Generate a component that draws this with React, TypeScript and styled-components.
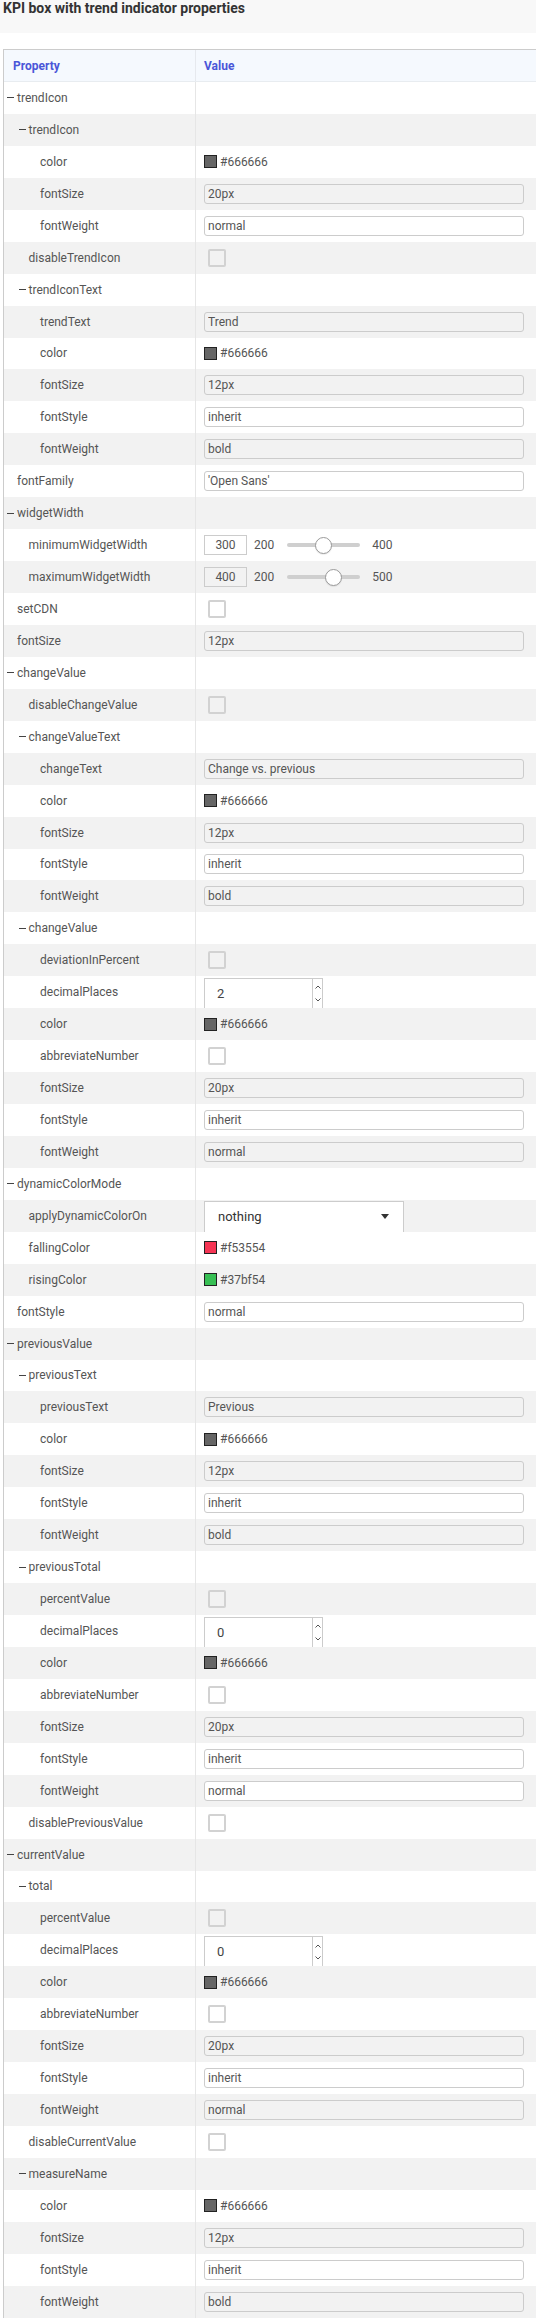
import React from 'react';
import styled, { createGlobalStyle } from 'styled-components';

const GlobalStyle = createGlobalStyle`
  html, body { margin: 0; padding: 0; background: #ffffff; }
  body {
    font-family: Roboto, "Liberation Sans", Arial, sans-serif;
    font-size: 12px;
    color: #555555;
  }
  * { box-sizing: border-box; }
`;

type Kind = 'group' | 'text' | 'color' | 'check' | 'slider' | 'spin' | 'select';

interface RowDef {
  label: string;
  level: number;
  kind: Kind;
  value?: string;
  disabled?: boolean;
  min?: number;
  max?: number;
}

const g = (label: string, level: number): RowDef => ({ label, level, kind: 'group' });
const tx = (label: string, level: number, value: string, disabled = false): RowDef => ({ label, level, kind: 'text', value, disabled });
const col = (label: string, level: number, value = '#666666'): RowDef => ({ label, level, kind: 'color', value });
const chk = (label: string, level: number): RowDef => ({ label, level, kind: 'check' });
const spin = (label: string, level: number, value: string): RowDef => ({ label, level, kind: 'spin', value });

const rows: RowDef[] = [
  g('trendIcon', 0),
  g('trendIcon', 1),
  col('color', 2),
  tx('fontSize', 2, '20px', true),
  tx('fontWeight', 2, 'normal'),
  chk('disableTrendIcon', 1),
  g('trendIconText', 1),
  tx('trendText', 2, 'Trend', true),
  col('color', 2),
  tx('fontSize', 2, '12px', true),
  tx('fontStyle', 2, 'inherit'),
  tx('fontWeight', 2, 'bold', true),
  tx('fontFamily', 0, "'Open Sans'"),
  g('widgetWidth', 0),
  { label: 'minimumWidgetWidth', level: 1, kind: 'slider', value: '300', min: 200, max: 400 },
  { label: 'maximumWidgetWidth', level: 1, kind: 'slider', value: '400', min: 200, max: 500, disabled: true },
  chk('setCDN', 0),
  tx('fontSize', 0, '12px', true),
  g('changeValue', 0),
  chk('disableChangeValue', 1),
  g('changeValueText', 1),
  tx('changeText', 2, 'Change vs. previous', true),
  col('color', 2),
  tx('fontSize', 2, '12px', true),
  tx('fontStyle', 2, 'inherit'),
  tx('fontWeight', 2, 'bold', true),
  g('changeValue', 1),
  chk('deviationInPercent', 2),
  spin('decimalPlaces', 2, '2'),
  col('color', 2),
  chk('abbreviateNumber', 2),
  tx('fontSize', 2, '20px', true),
  tx('fontStyle', 2, 'inherit'),
  tx('fontWeight', 2, 'normal', true),
  g('dynamicColorMode', 0),
  { label: 'applyDynamicColorOn', level: 1, kind: 'select', value: 'nothing' },
  col('fallingColor', 1, '#f53554'),
  col('risingColor', 1, '#37bf54'),
  tx('fontStyle', 0, 'normal'),
  g('previousValue', 0),
  g('previousText', 1),
  tx('previousText', 2, 'Previous', true),
  col('color', 2),
  tx('fontSize', 2, '12px', true),
  tx('fontStyle', 2, 'inherit'),
  tx('fontWeight', 2, 'bold', true),
  g('previousTotal', 1),
  chk('percentValue', 2),
  spin('decimalPlaces', 2, '0'),
  col('color', 2),
  chk('abbreviateNumber', 2),
  tx('fontSize', 2, '20px', true),
  tx('fontStyle', 2, 'inherit'),
  tx('fontWeight', 2, 'normal'),
  chk('disablePreviousValue', 1),
  g('currentValue', 0),
  g('total', 1),
  chk('percentValue', 2),
  spin('decimalPlaces', 2, '0'),
  col('color', 2),
  chk('abbreviateNumber', 2),
  tx('fontSize', 2, '20px', true),
  tx('fontStyle', 2, 'inherit'),
  tx('fontWeight', 2, 'normal', true),
  chk('disableCurrentValue', 1),
  g('measureName', 1),
  col('color', 2),
  tx('fontSize', 2, '12px', true),
  tx('fontStyle', 2, 'inherit'),
  tx('fontWeight', 2, 'bold', true),
];

const Page = styled.div`
  width: 536px;
`;

const TitleBar = styled.div`
  height: 33px;
  padding: 0 3px;
  margin-bottom: 16px;
  background: #f8f8f8;
  font-size: 14px;
  line-height: 17px;
  font-weight: 700;
  color: #333333;
`;

const Table = styled.div`
  margin-left: 3px;
  border-left: 1px solid #cccccc;
  border-top: 1px solid #cccccc;
`;

const HeaderRow = styled.div`
  display: grid;
  grid-template-columns: 192px 1fr;
  height: 32px;
  background: #f5f9fe;
  border-bottom: 1px solid #e8ecf0;
  font-weight: 700;
  color: #4a56d8;
`;

const HeaderCell = styled.div<{ $first?: boolean }>`
  display: flex;
  align-items: center;
  padding-left: ${(p) => (p.$first ? '9px' : '8px')};
  border-right: ${(p) => (p.$first ? '1px solid #e6e9ee' : 'none')};
`;

const Row = styled.div<{ $odd: boolean }>`
  display: grid;
  grid-template-columns: 192px 1fr;
  height: 31.95px;
  background: ${(p) => (p.$odd ? '#ffffff' : '#f2f2f2')};
`;

const PropCell = styled.div<{ $indent: number }>`
  display: flex;
  align-items: center;
  padding-left: ${(p) => p.$indent}px;
  border-right: 1px solid #e6e6e6;
  white-space: nowrap;
  overflow: hidden;
  color: #555555;
`;

const Toggle = styled.span`
  display: inline-block;
  width: 7px;
  height: 1px;
  margin-right: 3px;
  background: #444444;
`;

const ValueCell = styled.div`
  display: flex;
  align-items: center;
  padding: 0 12px 0 8px;
  min-width: 0;
`;

const TextInput = styled.input<{ $disabled?: boolean }>`
  width: 100%;
  height: 20px;
  margin: 0;
  padding: 0 3px;
  border: 1px solid #cccccc;
  border-radius: 3px;
  background: ${(p) => (p.$disabled ? '#f2f2f2' : '#ffffff')};
  font-family: Roboto, "Liberation Sans", Arial, sans-serif;
  font-size: 12px;
  color: #555555;
  outline: none;
`;

const Swatch = styled.span<{ $color: string }>`
  display: inline-block;
  width: 13px;
  height: 13px;
  margin-right: 3px;
  border: 1px solid #222222;
  background: ${(p) => p.$color};
`;

const ColorText = styled.span`
  color: #555555;
`;

const CheckBox = styled.span`
  display: inline-block;
  width: 18px;
  height: 18px;
  margin-left: 4px;
  border: 2px solid #d2d2d2;
  border-radius: 2px;
  background: transparent;
`;

const NumBox = styled.div<{ $disabled?: boolean }>`
  width: 43px;
  height: 20px;
  display: flex;
  align-items: center;
  justify-content: center;
  border: 1px solid #cccccc;
  background: ${(p) => (p.$disabled ? '#f2f2f2' : '#ffffff')};
  color: #555555;
`;

const RangeLabel = styled.span<{ $gap: number }>`
  margin-left: ${(p) => p.$gap}px;
  color: #555555;
`;

const Track = styled.div`
  position: relative;
  width: 73px;
  height: 4px;
  margin-left: 13px;
  border-radius: 2px;
  background: #cfcfcf;
`;

const Thumb = styled.div`
  position: absolute;
  top: 50%;
  width: 17px;
  height: 17px;
  margin-top: -8.5px;
  border-radius: 50%;
  border: 1px solid #9a9a9a;
  background: #ffffff;
  box-shadow: 0 1px 1px rgba(0, 0, 0, 0.08);
`;

const SpinBox = styled.div`
  display: flex;
  width: 119px;
  height: 30px;
  border: 1px solid #cccccc;
  border-bottom: none;
  background: #ffffff;
  align-self: flex-end;
`;

const SpinValue = styled.div`
  flex: 1;
  display: flex;
  align-items: center;
  padding-left: 12px;
  font-size: 13px;
  color: #444444;
`;

const SpinButtons = styled.div`
  width: 10px;
  display: flex;
  flex-direction: column;
  align-items: center;
  justify-content: space-around;
  border-left: 1px solid #cccccc;
  padding: 2px 0;
`;

const SelectBox = styled.div`
  display: flex;
  align-items: center;
  justify-content: space-between;
  width: 200px;
  height: 31px;
  padding: 0 14px 0 13px;
  border: 1px solid #cccccc;
  border-bottom: none;
  background: #ffffff;
  align-self: flex-end;
  font-size: 13px;
  color: #333333;
`;

const Caret = styled.span`
  width: 0;
  height: 0;
  border-left: 4px solid transparent;
  border-right: 4px solid transparent;
  border-top: 5px solid #333333;
`;

const Chevron: React.FC<{ up?: boolean }> = ({ up }) => (
  <svg width="6" height="4" viewBox="0 0 6 4">
    <polyline
      points={up ? '0.5,3.5 3,1 5.5,3.5' : '0.5,0.5 3,3 5.5,0.5'}
      fill="none"
      stroke="#555"
      strokeWidth="1"
    />
  </svg>
);

const Slider: React.FC<{ row: RowDef }> = ({ row }) => {
  const v = Number(row.value);
  const min = row.min ?? 0;
  const max = row.max ?? 100;
  const f = (v - min) / (max - min);
  return (
    <>
      <NumBox $disabled={row.disabled}>{row.value}</NumBox>
      <RangeLabel $gap={7}>{min}</RangeLabel>
      <Track>
        <Thumb style={{ left: `${f * 56}px` }} />
      </Track>
      <RangeLabel $gap={12}>{max}</RangeLabel>
    </>
  );
};

const renderValue = (row: RowDef) => {
  switch (row.kind) {
    case 'text':
      return <TextInput readOnly value={row.value} $disabled={row.disabled} />;
    case 'color':
      return (
        <>
          <Swatch $color={row.value || '#666666'} />
          <ColorText>{row.value}</ColorText>
        </>
      );
    case 'check':
      return <CheckBox />;
    case 'slider':
      return <Slider row={row} />;
    case 'spin':
      return (
        <SpinBox>
          <SpinValue>{row.value}</SpinValue>
          <SpinButtons>
            <Chevron up />
            <Chevron />
          </SpinButtons>
        </SpinBox>
      );
    case 'select':
      return (
        <SelectBox>
          <span>{row.value}</span>
          <Caret />
        </SelectBox>
      );
    default:
      return null;
  }
};

export default function App() {
  return (
    <Page>
      <GlobalStyle />
      <TitleBar>KPI box with trend indicator properties</TitleBar>
      <Table>
        <HeaderRow>
          <HeaderCell $first>Property</HeaderCell>
          <HeaderCell>Value</HeaderCell>
        </HeaderRow>
        {rows.map((row, i) => {
          const isGroup = row.kind === 'group';
          const indent = (isGroup ? 3 : 13) + row.level * 11.5;
          return (
            <Row key={i} $odd={i % 2 === 0}>
              <PropCell $indent={indent}>
                {isGroup && <Toggle />}
                {row.label}
              </PropCell>
              <ValueCell>{renderValue(row)}</ValueCell>
            </Row>
          );
        })}
      </Table>
    </Page>
  );
}
